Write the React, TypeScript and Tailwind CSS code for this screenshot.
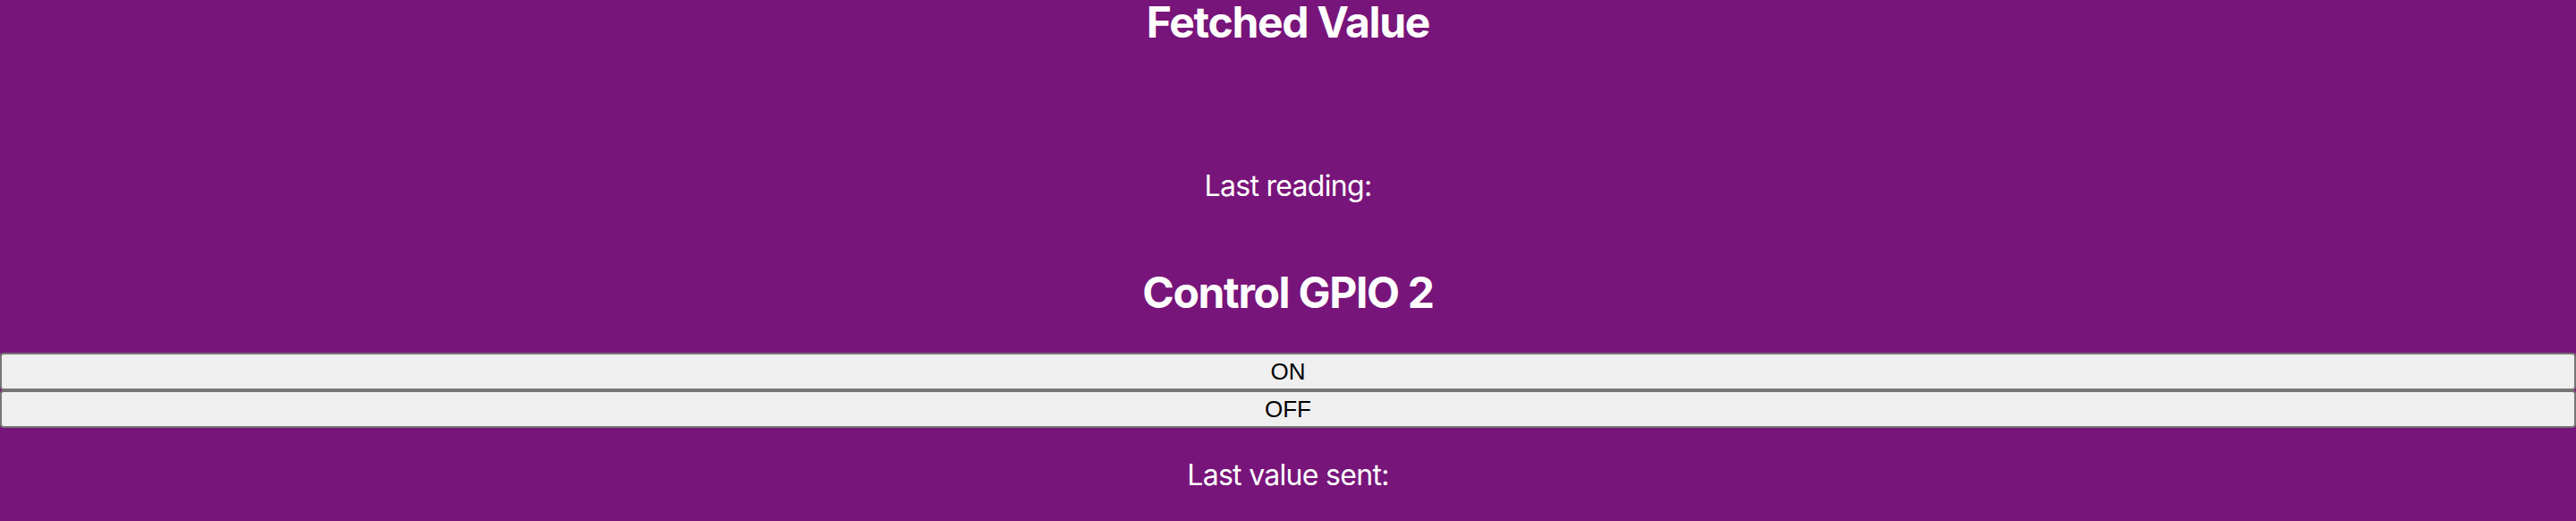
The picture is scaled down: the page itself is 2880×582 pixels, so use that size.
export default function App() {
    const sendValue = (v: string) => {
        console.log('send', v);
    };

    return (
        <div className="min-h-[582px] bg-[#78157a] text-center text-white font-['Inter',sans-serif]">
            <h2 className="pt-px text-[48px] leading-[48px] font-bold tracking-[-0.027em]">Fetched Value</h2>
            <p className="mt-[139px] text-[32px] leading-[40px] tracking-[-0.022em]">Last reading: </p>

            <h2 className="mt-[75px] text-[48px] leading-[48px] font-bold tracking-[-0.027em]">Control GPIO 2</h2>

            <div className="mt-[43px] flex flex-col">
                <button
                    onClick={() => sendValue('1')}
                    className="h-[42px] w-full rounded-[4px] border-2 border-[#767676] bg-[#efefef] text-[26px] leading-none text-black font-['Liberation_Sans',Arial,sans-serif]"
                >
                    ON
                </button>
                <button
                    onClick={() => sendValue('0')}
                    className="h-[42px] w-full rounded-[4px] border-2 border-[#767676] bg-[#efefef] text-[26px] leading-none text-black font-['Liberation_Sans',Arial,sans-serif]"
                >
                    OFF
                </button>
            </div>

            <p className="mt-[33px] text-[32px] leading-[40px] tracking-[-0.022em]">Last value sent: </p>
        </div>
    );
}
